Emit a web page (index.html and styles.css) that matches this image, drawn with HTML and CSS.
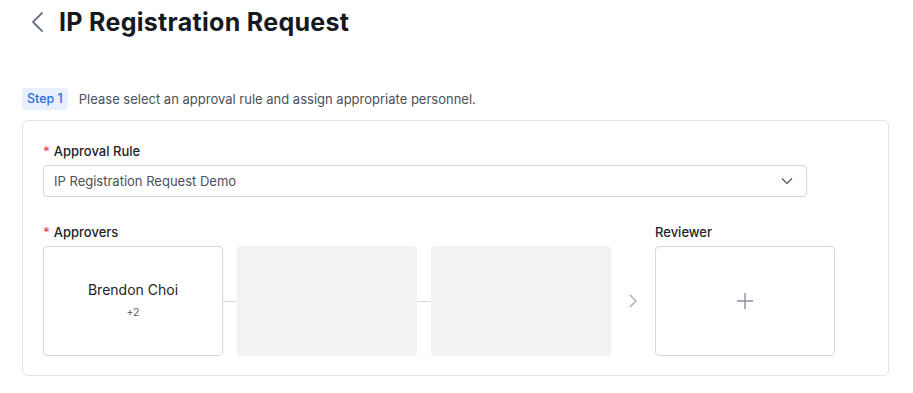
FILE: index.html
```html
<!DOCTYPE html>
<html>
<head>
<meta charset="utf-8">
<link rel="stylesheet" href="styles.css">
</head>
<body>
<div class="page">
  <header class="header">
    <span class="back">
      <svg width="14" height="22" viewBox="0 0 14 22"><path d="M11 2 L2 11 L11 20" fill="none" stroke="#6b7280" stroke-width="1.8" stroke-linecap="round" stroke-linejoin="round"/></svg>
    </span>
    <h1 class="title">IP Registration Request</h1>
  </header>
  <div class="step">
    <span class="badge">Step 1</span>
    <span class="step-text">Please select an approval rule and assign appropriate personnel.</span>
  </div>
  <section class="card">
    <div class="label"><span class="req">*</span>Approval Rule</div>
    <div class="select">
      <span>IP Registration Request Demo</span>
      <svg width="12" height="8" viewBox="0 0 12 8"><path d="M1 1.5 L6 6.5 L11 1.5" fill="none" stroke="#4b5563" stroke-width="1.2"/></svg>
    </div>
    <div class="people">
      <div class="group">
        <div class="label"><span class="req">*</span>Approvers</div>
        <div class="chain">
          <div class="box filled">
            <div class="name">Brendon Choi</div>
            <div class="more">+2</div>
          </div>
          <div class="link"></div>
          <div class="box empty"></div>
          <div class="link"></div>
          <div class="box empty"></div>
        </div>
      </div>
      <div class="arrow">
        <svg width="10" height="14" viewBox="0 0 10 14"><path d="M2 1 L8 7 L2 13" fill="none" stroke="#9ca3af" stroke-width="1.2"/></svg>
      </div>
      <div class="group">
        <div class="label">Reviewer</div>
        <div class="box filled add">
          <svg width="18" height="18" viewBox="0 0 18 18"><path d="M9 1 V17 M1 9 H17" stroke="#8b9098" stroke-width="1.4"/></svg>
        </div>
      </div>
    </div>
  </section>
</div>
</body>
</html>
```
FILE: styles.css
```css
* { box-sizing: border-box; }
body {
  margin: 0;
  font-family: Inter, "Noto Sans", sans-serif;
  color: #1f2329;
  background: #fff;
}
.page {
  padding: 0 24px 0 22px;
  width: 913px;
}
.header {
  display: flex;
  align-items: center;
  height: 44px;
  padding-left: 9px;
}
.back {
  display: flex;
  width: 28px;
}
.title {
  margin: 0;
  font-size: 25px;
  font-weight: 700;
  color: #16191d;
  letter-spacing: 0.3px;
}
.step {
  display: flex;
  align-items: center;
  margin-top: 44px;
  height: 22px;
  gap: 11px;
}
.badge {
  background: #e8f0fe;
  color: #2f6bdc;
  font-size: 12.5px;
  font-weight: 500;
  height: 22px;
  line-height: 22px;
  padding: 0 5px;
  border-radius: 4px;
}
.step-text {
  font-size: 13px;
  color: #4b5058;
}
.card {
  margin-top: 10px;
  border: 1px solid #e1e4e8;
  border-radius: 6px;
  padding: 21px 20px 19px 20px;
  width: 867px;
}
.label {
  font-size: 13px;
  font-weight: 500;
  line-height: 18px;
  color: #1f2329;
}
.req {
  color: #e5484d;
  margin-right: 4px;
}
.select {
  margin-top: 5px;
  width: 764px;
  height: 32px;
  border: 1px solid #d4d7dc;
  border-radius: 4px;
  display: flex;
  align-items: center;
  justify-content: space-between;
  padding: 0 13px 0 10px;
  font-size: 13px;
  color: #4b5058;
}
.people {
  display: flex;
  margin-top: 26px;
}
.chain {
  display: flex;
  align-items: center;
  margin-top: 5px;
}
.box {
  width: 180px;
  height: 110px;
  border-radius: 4px;
  display: flex;
  flex-direction: column;
  align-items: center;
  justify-content: center;
}
.filled {
  border: 1px solid #d4d7dc;
  background: #fff;
}
.group > .box { margin-top: 5px; }
.empty { background: #f1f2f4; }
.link {
  width: 14px;
  height: 1px;
  background: #d4d7dc;
}
.name {
  font-size: 14px;
  color: #1f2329;
  margin-top: -2px;
}
.more {
  font-size: 10.5px;
  color: #5b6068;
  margin-top: 8px;
}
.arrow {
  width: 44px;
  display: flex;
  align-items: center;
  justify-content: center;
  padding-top: 23px;
}
```
